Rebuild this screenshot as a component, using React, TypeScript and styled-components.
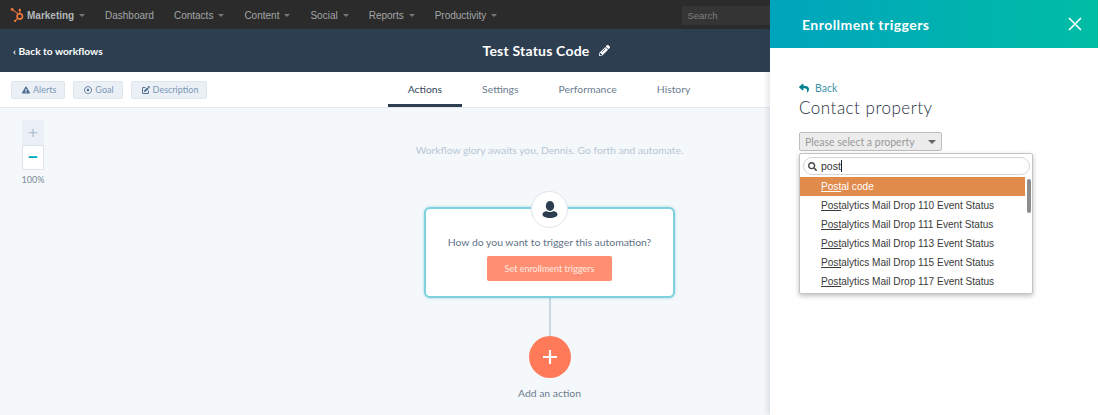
import React from "react";
import styled, { createGlobalStyle } from "styled-components";
import { FaExclamationTriangle, FaHubspot, FaPencilAlt, FaRegDotCircle, FaReply, FaSearch } from "react-icons/fa";
import { FaPenToSquare } from "react-icons/fa6";

const navItems = [
  { label: "Contacts" },
  { label: "Content" },
  { label: "Social" },
  { label: "Reports" },
  { label: "Productivity" },
];

const tabs = ["Actions", "Settings", "Performance", "History"];

const results = [
  { rest: "al code", active: true },
  { rest: "alytics Mail Drop 110 Event Status" },
  { rest: "alytics Mail Drop 111 Event Status" },
  { rest: "alytics Mail Drop 113 Event Status" },
  { rest: "alytics Mail Drop 115 Event Status" },
  { rest: "alytics Mail Drop 117 Event Status" },
];

export default function App() {
  return (
    <Page>
      <GlobalStyle />

      <TopNav>
        <Brand>
          <LogoMark><FaHubspot /></LogoMark>
          Marketing
          <Caret />
        </Brand>
        <NavItem>Dashboard</NavItem>
        {navItems.map((item) => (
          <NavItem key={item.label}>
            {item.label}
            <Caret />
          </NavItem>
        ))}
        <NavSearch>Search</NavSearch>
      </TopNav>

      <TitleBar>
        <BackLink>‹ Back to workflows</BackLink>
        <Title>
          Test Status Code
          <FaPencilAlt size={11} />
        </Title>
      </TitleBar>

      <SubBar>
        <ToolGroup>
          <ToolButton><FaExclamationTriangle size={8} />Alerts</ToolButton>
          <ToolButton><FaRegDotCircle size={8} />Goal</ToolButton>
          <ToolButton><FaPenToSquare size={8} />Description</ToolButton>
        </ToolGroup>
        <Tabs>
          {tabs.map((tab, i) => (
            <Tab key={tab} $active={i === 0}>{tab}</Tab>
          ))}
        </Tabs>
      </SubBar>

      <Canvas>
        <ZoomControl>
          <ZoomButton $disabled>+</ZoomButton>
          <ZoomButton>−</ZoomButton>
          <ZoomLabel>100%</ZoomLabel>
        </ZoomControl>

        <Flow>
          <Hint>Workflow glory awaits you, Dennis. Go forth and automate.</Hint>
          <TriggerCard>
            <PersonBadge>
              <svg width="16" height="17" viewBox="0 0 16 17" fill="#2d3e50">
                <ellipse cx="8" cy="5" rx="4.2" ry="5" />
                <path d="M0.5 13.5c0-2 2.2-3 4.2-3.4 1 1.3 5.600 1.3 6.600 0 2 .4 4.200 1.400 4.200 3.400 0 1.800-3 3.500-7.500 3.500S.5 15.300.5 13.500z" />
              </svg>
            </PersonBadge>
            <CardText>How do you want to trigger this automation?</CardText>
            <TriggerButton>Set enrollment triggers</TriggerButton>
          </TriggerCard>
          <Connector />
          <AddButton>
            <svg width="18" height="18" viewBox="0 0 18 18" stroke="#fff" strokeWidth="2.2">
              <path d="M9 2v14M2 9h14" />
            </svg>
          </AddButton>
          <AddLabel>Add an action</AddLabel>
        </Flow>
      </Canvas>

      <Panel>
        <PanelHeader>
          Enrollment triggers
          <svg width="14" height="14" viewBox="0 0 14 14" stroke="#fff" strokeWidth="1.6">
            <path d="M1 1l12 12M13 1L1 13" />
          </svg>
        </PanelHeader>
        <PanelBody>
          <PanelBack><FaReply size={10} />Back</PanelBack>
          <PanelTitle>Contact property</PanelTitle>
          <SelectField>
            Please select a property
            <SelectCaret />
          </SelectField>
          <Dropdown>
            <SearchBox>
              <FaSearch size={9} color="#444" />
              <SearchText>post</SearchText>
            </SearchBox>
            <ResultList>
              {results.map((r) => (
                <Result key={r.rest} $active={r.active}>
                  <Match>Post</Match>
                  {r.rest}
                </Result>
              ))}
              <ScrollThumb />
            </ResultList>
          </Dropdown>
        </PanelBody>
      </Panel>
    </Page>
  );
}

const GlobalStyle = createGlobalStyle`
  html, body {
    margin: 0;
    padding: 0;
    background: #fff;
  }
  * {
    box-sizing: border-box;
  }
`;

const Page = styled.div`
  position: relative;
  display: flex;
  flex-direction: column;
  width: 1100px;
  height: 415px;
  padding-right: 2px;
  overflow: hidden;
  font-family: "Lato", "Open Sans", sans-serif;
  background: #fff;
`;

const TopNav = styled.div`
  display: flex;
  align-items: center;
  flex: 0 0 29px;
  padding: 1px 0 0 10px;
  background: #2b2b2b;
  color: #a3a6a9;
  font-family: "Liberation Sans", sans-serif;
  font-size: 10px;
`;

const Brand = styled.div`
  display: flex;
  align-items: center;
  width: 95px;
  color: #b4b7b9;
  font-weight: 700;
`;

const LogoMark = styled.span`
  display: flex;
  margin-right: 3px;
  color: #f0793e;
  font-size: 14px;
`;

const NavItem = styled.div`
  display: flex;
  align-items: center;
  margin-right: 20px;
`;

const Caret = styled.span`
  width: 0;
  height: 0;
  margin-left: 5px;
  border-left: 3.500px solid transparent;
  border-right: 3.500px solid transparent;
  border-top: 3.500px solid #77797b;
`;

const NavSearch = styled.div`
  margin-left: 165px;
  width: 120px;
  padding: 4px 5px;
  background: #353535;
  color: #7d7f81;
  font-size: 9.500px;
`;

const TitleBar = styled.div`
  display: grid;
  grid-template-columns: 1fr auto 1fr;
  align-items: center;
  flex: 0 0 43px;
  padding: 0 18px 0 13px;
  background: #2d3e50;
  color: #fff;
`;

const BackLink = styled.div`
  font-size: 10.200px;
  font-weight: 700;
`;

const Title = styled.div`
  display: flex;
  align-items: center;
  gap: 10px;
  font-size: 14px;
  font-weight: 700;
  letter-spacing: 0.2px;
`;

const SubBar = styled.div`
  display: grid;
  grid-template-columns: 1fr auto 1fr;
  align-items: center;
  flex: 0 0 35px;
  padding: 0 11px;
  background: #fff;
  border-bottom: 1px solid #e3e8ee;
`;

const ToolGroup = styled.div`
  display: flex;
  gap: 8px;
`;

const ToolButton = styled.div`
  display: flex;
  align-items: center;
  gap: 3px;
  height: 18px;
  padding: 0 8px 0 10px;
  background: #eaf0f6;
  border: 1px solid #dde5ed;
  border-radius: 2px;
  color: #7c98b6;
  font-size: 9px;

  svg {
    color: #516f90;
  }
`;

const Tabs = styled.div`
  display: flex;
  height: 35px;
`;

const Tab = styled.div<{ $active?: boolean }>`
  display: flex;
  align-items: center;
  padding: 0 20px 2px;
  color: ${({ $active }) => ($active ? "#33475b" : "#6b7c8f")};
  font-size: 10.400px;
  box-shadow: ${({ $active }) => ($active ? "inset 0 -3px 0 #2d3e50" : "none")};
`;

const Canvas = styled.div`
  position: relative;
  flex: 1;
  display: flex;
  justify-content: center;
  padding-left: 1px;
  background: #f5f8fa;
`;

const ZoomControl = styled.div`
  position: absolute;
  left: 22px;
  top: 12px;
  display: flex;
  flex-direction: column;
  align-items: center;
  width: 22px;
`;

const ZoomButton = styled.div<{ $disabled?: boolean }>`
  display: flex;
  align-items: center;
  justify-content: center;
  width: 22px;
  height: 25px;
  background: ${({ $disabled }) => ($disabled ? "#eaf0f6" : "#fff")};
  border: 1px solid ${({ $disabled }) => ($disabled ? "#eaf0f6" : "#dfe3eb")};
  color: ${({ $disabled }) => ($disabled ? "#b0c1d4" : "#00a4bd")};
  font-family: "Liberation Sans", sans-serif;
  font-size: 17px;
  font-weight: ${({ $disabled }) => ($disabled ? 400 : 700)};
`;

const ZoomLabel = styled.div`
  margin-top: 4px;
  color: #7c8a99;
  font-size: 9px;
`;

const Flow = styled.div`
  display: flex;
  flex-direction: column;
  align-items: center;
`;

const Hint = styled.div`
  margin-top: 36px;
  color: #b7c6d6;
  font-size: 10.300px;
`;

const TriggerCard = styled.div`
  position: relative;
  display: flex;
  flex-direction: column;
  align-items: center;
  width: 251px;
  height: 91px;
  margin-top: 51px;
  padding-top: 27px;
  background: #fff;
  border: 2px solid #7fd1de;
  border-radius: 6px;
  box-shadow: 0 0 3px rgba(0, 164, 189, 0.4);
`;

const PersonBadge = styled.div`
  position: absolute;
  top: -18px;
  left: 50%;
  display: flex;
  align-items: center;
  justify-content: center;
  width: 37px;
  height: 37px;
  margin-left: -18.500px;
  background: #fff;
  border: 1px solid #dfe3eb;
  border-radius: 50%;
`;

const CardText = styled.div`
  color: #5f7285;
  font-size: 10.400px;
`;

const TriggerButton = styled.div`
  display: flex;
  align-items: center;
  justify-content: center;
  width: 125px;
  height: 25px;
  margin-top: 8px;
  background: #ff8f73;
  border-radius: 2px;
  color: #ffe9e2;
  font-size: 9px;
`;

const Connector = styled.div`
  width: 2px;
  height: 38px;
  background: #cbd6e2;
`;

const AddButton = styled.div`
  display: flex;
  align-items: center;
  justify-content: center;
  width: 42px;
  height: 42px;
  background: #ff7a59;
  border-radius: 50%;
`;

const AddLabel = styled.div`
  margin-top: 9px;
  color: #6b7c8f;
  font-size: 10.400px;
`;

const Panel = styled.div`
  position: absolute;
  top: 0;
  left: 770px;
  width: 328px;
  height: 415px;
  background: #fff;
  box-shadow: -3px 0 5px rgba(45, 62, 80, 0.12);
`;

const PanelHeader = styled.div`
  display: flex;
  align-items: center;
  justify-content: space-between;
  height: 48px;
  padding: 0 16px 0 32px;
  background: linear-gradient(90deg, #00a4bd, #00bda5);
  color: #fff;
  font-size: 14px;
  font-weight: 700;
  letter-spacing: 0.45px;
`;

const PanelBody = styled.div`
  position: relative;
  padding: 34px 29px 0;
`;

const PanelBack = styled.div`
  display: flex;
  align-items: center;
  gap: 6px;
  color: #3f93a8;
  font-size: 10.500px;

  svg {
    color: #00828f;
  }
`;

const PanelTitle = styled.div`
  margin-top: 3px;
  color: #1f2f40;
  font-size: 17px;
  font-weight: 300;
  letter-spacing: 0.5px;
`;

const SelectField = styled.div`
  position: relative;
  display: flex;
  align-items: center;
  width: 143px;
  height: 19px;
  margin-top: 14px;
  padding-left: 5px;
  background: #ececec;
  border: 1px solid #bdbdbd;
  border-radius: 2px;
  color: #9a9a9a;
  font-size: 10.500px;
`;

const SelectCaret = styled.span`
  position: absolute;
  right: 5px;
  top: 7px;
  border-left: 4px solid transparent;
  border-right: 4px solid transparent;
  border-top: 4px solid #666;
`;

const Dropdown = styled.div`
  position: absolute;
  top: 105px;
  left: 29px;
  width: 234px;
  height: 141px;
  padding-top: 3px;
  background: #fff;
  border: 1px solid #c4c4c4;
  border-radius: 2px;
  box-shadow: 0 2px 5px rgba(0, 0, 0, 0.25);
`;

const SearchBox = styled.div`
  display: flex;
  align-items: center;
  gap: 4px;
  height: 18px;
  margin: 0 2px 2px 3px;
  padding-left: 4px;
  border: 1px solid #d6d6d6;
  border-radius: 9px;
`;

const SearchText = styled.span`
  padding-right: 0;
  border-right: 1px solid #222;
  color: #333;
  font-family: "Liberation Sans", sans-serif;
  font-size: 10.500px;
  line-height: 12px;
`;

const ResultList = styled.div`
  position: relative;
`;

const Result = styled.div<{ $active?: boolean }>`
  display: flex;
  align-items: center;
  height: 19px;
  margin-right: 7px;
  padding: 0 0 0 21px;
  background: ${({ $active }) => ($active ? "#e08a4c" : "transparent")};
  color: ${({ $active }) => ($active ? "#fff" : "#3a3a3a")};
  font-family: "Liberation Sans", sans-serif;
  font-size: 10.100px;
  white-space: pre;
`;

const Match = styled.span`
  text-decoration: underline;
`;

const ScrollThumb = styled.div`
  position: absolute;
  top: 2px;
  right: 1px;
  width: 4px;
  height: 34px;
  background: #8d8d8d;
  border-radius: 2px;
`;
